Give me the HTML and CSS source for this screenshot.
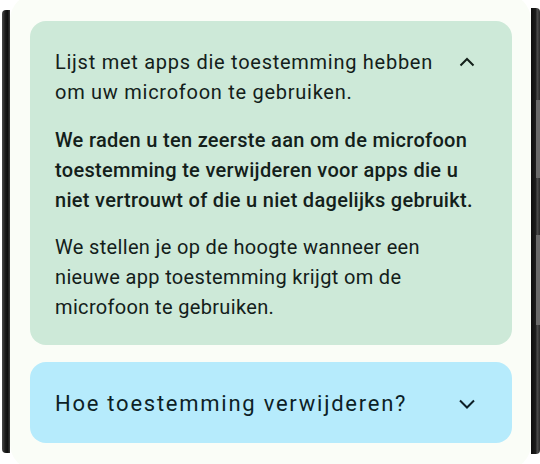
FILE: index.html
```html
<!DOCTYPE html>
<html>
<head>
  <meta charset="utf-8">
  <title>Microfoon toestemming</title>
  <link rel="stylesheet" href="styles.css">
</head>
<body>
  <div class="device">
    <div class="bezel bezel-left"></div>

    <div class="screen">
      <!-- open card -->
      <div class="card card-green">
        <div class="card-head">
          <div class="card-title">Lijst met apps die toestemming hebben om uw microfoon te gebruiken.</div>
          <svg class="chev" viewBox="0 0 24 24" width="24" height="24">
            <path d="M5.5 15.5 L12 9 L18.5 15.5" fill="none" stroke="currentColor" stroke-width="2"/>
          </svg>
        </div>
        <p class="card-text strong">We raden u ten zeerste aan om de microfoon toestemming te verwijderen voor apps die u niet vertrouwt of die u niet dagelijks gebruikt.</p>
        <p class="card-text">We stellen je op de hoogte wanneer een nieuwe app toestemming krijgt om de microfoon te gebruiken.</p>
      </div>

      <!-- closed card -->
      <div class="card card-blue">
        <div class="card-head">
          <div class="card-title big">Hoe toestemming verwijderen?</div>
          <svg class="chev" viewBox="0 0 24 24" width="24" height="24">
            <path d="M5 8.5 L12 15.5 L19 8.5" fill="none" stroke="currentColor" stroke-width="2"/>
          </svg>
        </div>
      </div>
    </div>

    <div class="bezel bezel-right">
      <div class="btn btn-top"></div>
      <div class="btn btn-bottom"></div>
    </div>
  </div>
</body>
</html>
```

FILE: styles.css
```css
* {
  box-sizing: border-box;
}

body {
  margin: 0;
  background-color: #ffffff;
  font-family: Roboto, "Noto Sans", Arial, sans-serif;
  color: #13201a;
}

.device {
  display: flex;
  height: 464px;
  width: 540px;
}

/* phone edges */
.bezel {
  width: 8px;
  margin: 10px 0 11px 0;
}
.bezel-left {
  margin-left: 2px;
  background: linear-gradient(to right, #4a4a4a, #1b1b1b 40%, #0e0e0e 70%, #3c3c3c);
  border-radius: 4px 0 0 4px;
}
.bezel-right {
  margin-top: 8px;
  margin-bottom: 10px;
  width: 9px;
  display: flex;
  flex-direction: column;
  background: linear-gradient(to right, #0d0d0d, #1c1c1c 50%, #4b4b4b 70%, #2a2a2a);
  border-radius: 0 4px 4px 0;
}
.btn {
  margin-left: 5px;
  width: 4px;
  background: #6a6a6a;
}
.btn-top {
  margin-top: 92px;
  height: 78px;
}
.btn-bottom {
  margin-top: 57px;
  height: 90px;
}

.screen {
  flex: 1;
  background-color: #fafdf7;
  border-radius: 26px;
  margin-top: -6px;
  margin-bottom: -6px;
  padding: 27px 19px 0 20px;
  display: flex;
  flex-direction: column;
  gap: 17px;
}

.card {
  border-radius: 16px;
  padding: 26px 25px 23px 25px;
}
.card-green {
  background-color: #cde9d8;
}
.card-blue {
  background-color: #b6ebfc;
  color: #0d1f27;
  padding-top: 27px;
  padding-bottom: 24px;
}

.card-head {
  display: flex;
  align-items: flex-start;
  gap: 14px;
}
.card-title {
  flex: 1;
  font-size: 20px;
  line-height: 30px;
  letter-spacing: 0.73px;
}
.card-title.big {
  font-size: 22px;
  letter-spacing: 1.75px;
}
.chev {
  flex: none;
  margin-top: 3px;
  margin-right: 8px;
}

.card-text {
  margin: 18px 6px 0 0;
  font-size: 20px;
  line-height: 30px;
  letter-spacing: 0.34px;
}
.card-text + .card-text {
  margin-top: 17px;
}
.strong {
  font-weight: 500;
  letter-spacing: 0.3px;
}
```
